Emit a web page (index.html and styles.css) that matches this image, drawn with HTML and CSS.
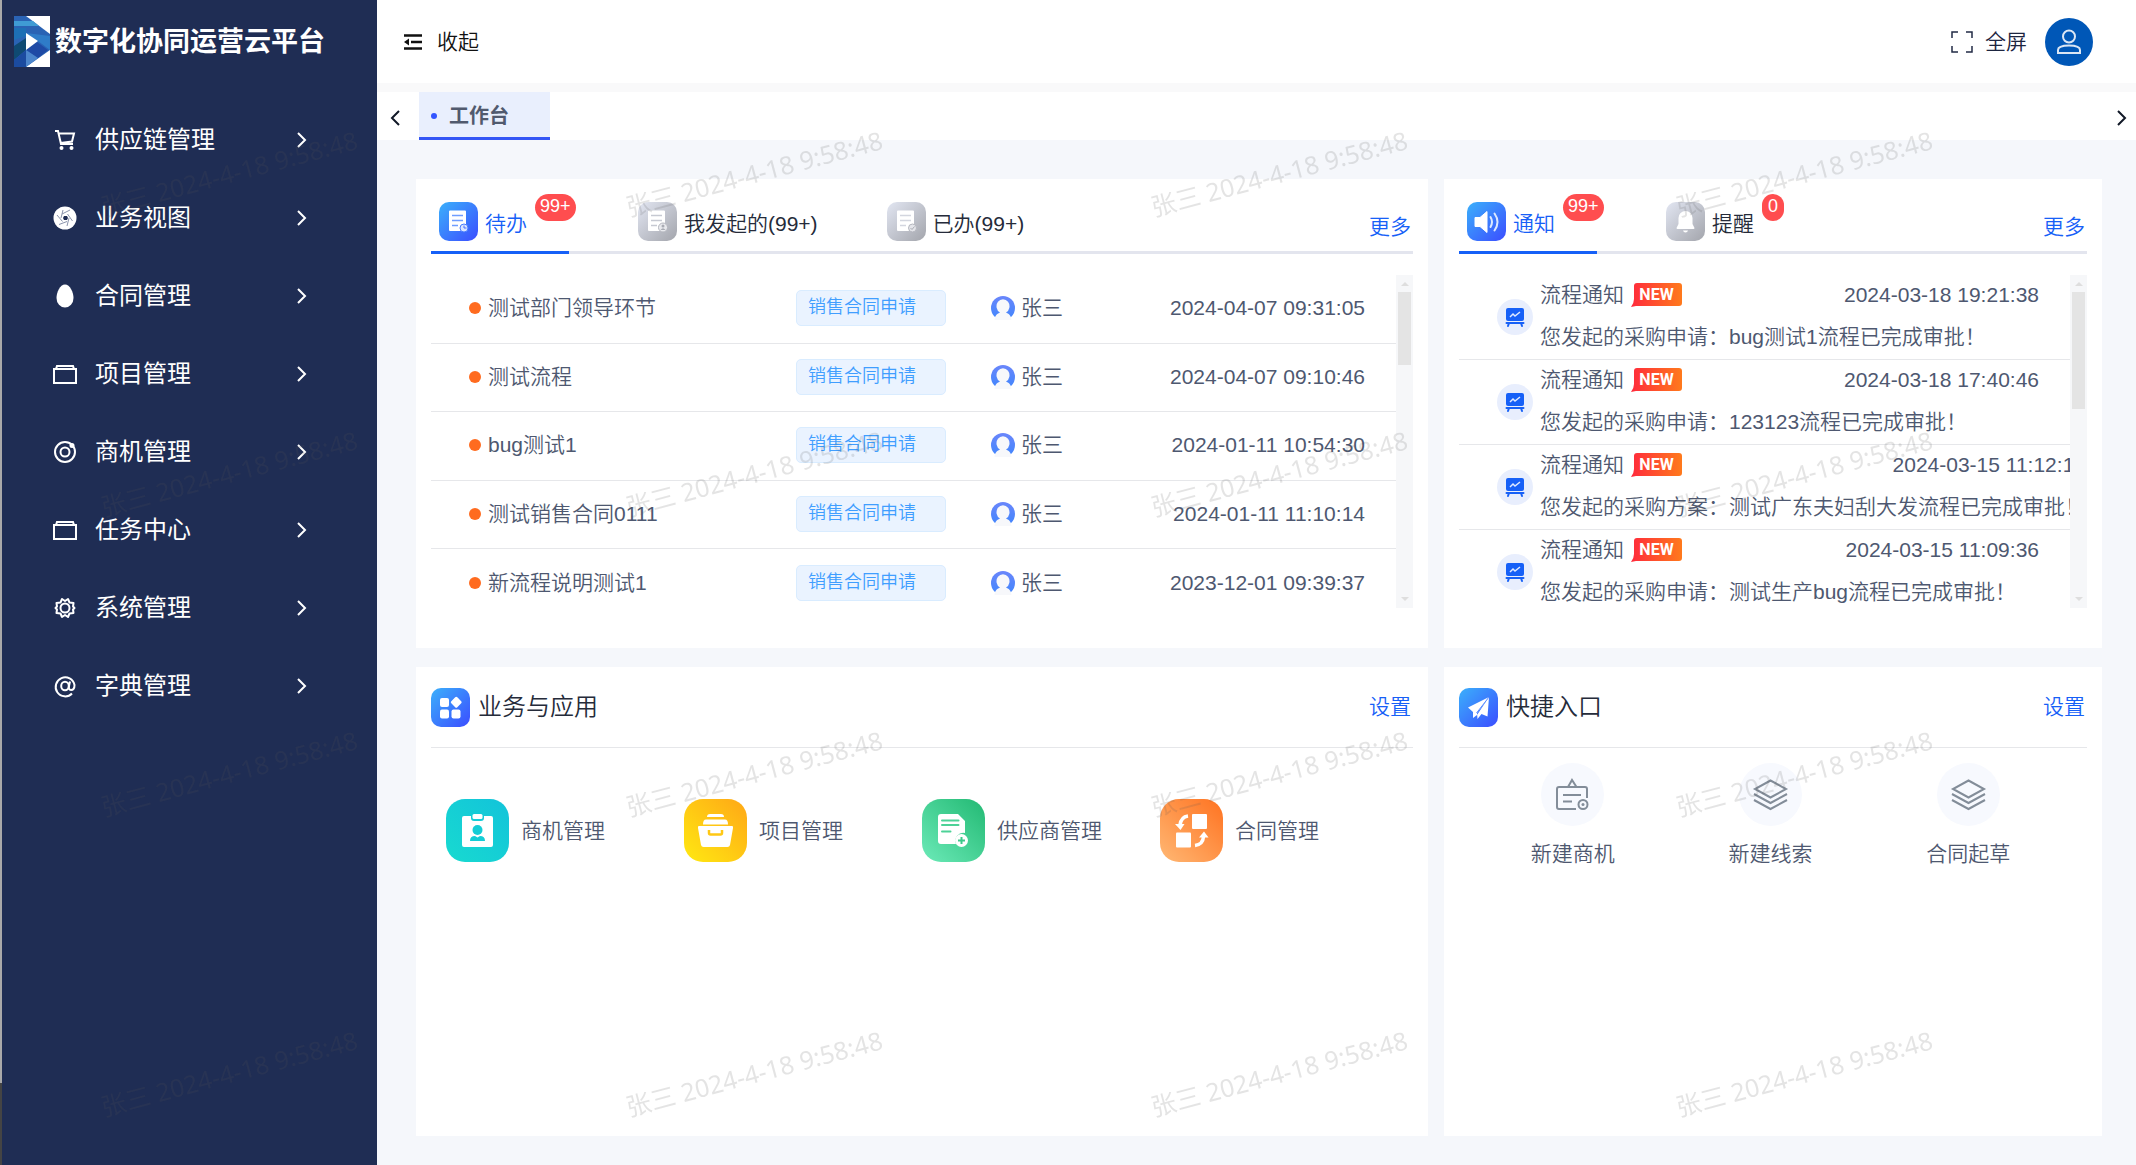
FILE: index.html
```html
<!DOCTYPE html>
<html lang="zh-CN">
<head>
<meta charset="utf-8">
<meta name="viewport" content="width=device-width, initial-scale=1">
<title>数字化协同运营云平台</title>
<link rel="stylesheet" href="styles.css">
</head>
<body>
<svg class="defs" aria-hidden="true">
  <defs>
    <linearGradient id="g-blue" x1="0" y1="0" x2="1" y2="1"><stop offset="0" stop-color="#3bb0fb"/><stop offset="1" stop-color="#3b4dff"/></linearGradient>
    <linearGradient id="g-gray" x1="0" y1="0" x2="1" y2="1"><stop offset="0" stop-color="#e2e6f2"/><stop offset="1" stop-color="#a3a5ac"/></linearGradient>
    <linearGradient id="g-cyan" x1="0" y1="1" x2="1" y2="0"><stop offset="0" stop-color="#18dad0"/><stop offset="1" stop-color="#12c3da"/></linearGradient>
    <linearGradient id="g-yellow" x1="0" y1="1" x2="1" y2="0"><stop offset="0" stop-color="#ffe912"/><stop offset="1" stop-color="#ffa716"/></linearGradient>
    <linearGradient id="g-green" x1="0" y1="1" x2="1" y2="0"><stop offset="0" stop-color="#6ceab8"/><stop offset="1" stop-color="#22b973"/></linearGradient>
    <linearGradient id="g-orange" x1="0" y1="1" x2="1" y2="0"><stop offset="0" stop-color="#ffb874"/><stop offset="1" stop-color="#ff7220"/></linearGradient>
    <linearGradient id="g-new" x1="0" y1="0" x2="1" y2="0"><stop offset="0" stop-color="#ff2a3c"/><stop offset="1" stop-color="#ff7a1c"/></linearGradient>
    <linearGradient id="g-user" x1="0" y1="0" x2="0" y2="1"><stop offset="0" stop-color="#6a86fb"/><stop offset="1" stop-color="#3f86fd"/></linearGradient>
    <symbol id="i-arrow" viewBox="0 0 12 18"><path d="M2 2l7 7-7 7" fill="none" stroke="currentColor" stroke-width="2"/></symbol>
    <symbol id="i-arrow-left" viewBox="0 0 12 18"><path d="M9 2L2 9l7 7" fill="none" stroke="currentColor" stroke-width="2"/></symbol>
    <symbol id="i-folder" viewBox="0 0 24 24"><path d="M1 7h22v14H1zM3 7l1-3h16l1 3" fill="none" stroke="currentColor" stroke-width="2"/></symbol>
    <symbol id="i-doc" viewBox="0 0 39 39">
      <path d="M10 9.500q0-1 1-1h15q1 0 1 1V22a5 5 0 0 0-3 7H11q-1 0-1-1z" fill="#fff"/>
      <path d="M13 13.500h11M13 18.500h11M13 23.500h6" stroke="currentColor" stroke-width="1.500"/>
    </symbol>
    <symbol id="i-user" viewBox="0 0 24 24">
      <circle cx="12" cy="12" r="12" fill="url(#g-user)"/>
      <path d="M3.500 24c.5-5 3-6.500 5.500-7.500a6.500 7 0 1 1 6 0c2.500 1 5 2.500 5.500 7.500z" fill="#f7f8fb"/>
    </symbol>
    <symbol id="i-board" viewBox="0 0 36 36">
      <circle cx="18" cy="18" r="18" fill="#e8eefd"/>
      <rect x="9" y="9" width="18" height="13" rx="2" fill="#1660f7"/>
      <path d="M13 18l3-3 2 2 5-4" fill="none" stroke="#dfe9ff" stroke-width="1.500"/>
      <path d="M9.500 24h17M12 24l-1 3M24 24l1 3" stroke="#1660f7" stroke-width="2" stroke-linecap="round"/>
    </symbol>
    <symbol id="i-newtag" viewBox="0 0 51 24"><path d="M6 0h42q3 0 3 3v17q0 3-3 3H5l-5 1q3-4 3-8V3q0-3 3-3z" fill="url(#g-new)"/></symbol>
    <symbol id="i-layers" viewBox="0 0 63 63">
      <circle cx="31.500" cy="31.500" r="31.500" fill="#f7f9fe"/>
      <path d="M31.500 17.500L47 26l-15.500 8.500L16 26zM15 31l16.500 9L48 31M15 37l16.500 9L48 37" fill="none" stroke="#838d99" stroke-width="2"/>
    </symbol>
  </defs>
</svg>

<div class="app">
  <aside class="sidebar">
    <div class="brand">
      <svg class="brand-logo" viewBox="0 0 36 51" aria-hidden="true">
        <path d="M0 0h36v51H0z" fill="#fff"/>
        <path d="M0 0h12l24 18v16L12 51H0z" fill="#2a63b4"/>
        <path d="M0 5h19l6 5H0z" fill="#3f9bd4"/>
        <path d="M0 12h12v8L0 24z" fill="#1d6fb5"/>
        <path d="M12 17l24 3v14l-12-9z" fill="#2f7cc8"/>
        <path d="M0 30l12-8v12L0 44z" fill="#0f4a72"/>
        <path d="M0 44l12-10v17H0z" fill="#1b4ba0"/>
        <path d="M12 34l11-8 11 8-10 8z" fill="#1f4aa5"/>
        <path d="M12 34l12 8-12 9z" fill="#4c86cc"/>
        <path d="M12 17l12 8-12 9z" fill="#fff"/>
      </svg>
      <h1 class="brand-name">数字化协同运营云平台</h1>
    </div>
    <nav class="menu">
      <a class="menu-item" href="#"><svg class="menu-icon" viewBox="0 0 24 24" aria-hidden="true"><path d="M2 3h3l3 13h12M5 5.500h16l-2 8L7.500 15" fill="none" stroke="currentColor" stroke-width="2"/><circle cx="8.500" cy="20" r="2" fill="currentColor"/><circle cx="18.500" cy="20" r="2" fill="currentColor"/></svg><span class="menu-text">供应链管理</span><svg class="arrow" aria-hidden="true"><use href="#i-arrow"/></svg></a>
      <a class="menu-item" href="#"><svg class="menu-icon" viewBox="0 0 24 24" aria-hidden="true"><circle cx="12" cy="12" r="11.500" fill="currentColor"/><path d="M9 8L17 4M14.500 8l5 7M16 12l-2 8M14 15.500l-8 3M9.500 15.500L4 9M8 12l2-8" stroke="#8a93ab"/><path d="M11 10h3l1 2-1 2h-3l-1-2z" fill="#1f2d54"/></svg><span class="menu-text">业务视图</span><svg class="arrow" aria-hidden="true"><use href="#i-arrow"/></svg></a>
      <a class="menu-item" href="#"><svg class="menu-icon" viewBox="0 0 24 24" aria-hidden="true"><path d="M12 0.500c5 0 8.500 8 8.500 13.500a8.500 9.500 0 0 1-17 0C3.500 8.500 7 .5 12 .5z" fill="currentColor"/></svg><span class="menu-text">合同管理</span><svg class="arrow" aria-hidden="true"><use href="#i-arrow"/></svg></a>
      <a class="menu-item" href="#"><svg class="menu-icon" aria-hidden="true"><use href="#i-folder"/></svg><span class="menu-text">项目管理</span><svg class="arrow" aria-hidden="true"><use href="#i-arrow"/></svg></a>
      <a class="menu-item" href="#"><svg class="menu-icon" viewBox="0 0 24 24" aria-hidden="true"><g fill="none" stroke="currentColor" stroke-width="2"><circle cx="12" cy="12" r="10"/><circle cx="12" cy="12" r="4.500"/></g><circle cx="19" cy="5.500" r="2.500" fill="currentColor"/></svg><span class="menu-text">商机管理</span><svg class="arrow" aria-hidden="true"><use href="#i-arrow"/></svg></a>
      <a class="menu-item" href="#"><svg class="menu-icon" aria-hidden="true"><use href="#i-folder"/></svg><span class="menu-text">任务中心</span><svg class="arrow" aria-hidden="true"><use href="#i-arrow"/></svg></a>
      <a class="menu-item" href="#"><svg class="menu-icon" viewBox="0 0 24 24" aria-hidden="true"><g fill="none" stroke="currentColor" stroke-width="2" stroke-linejoin="round"><path d="M9 3l3 2 3-2 1.500 3.500 4 .5-.5 3.500 1.500 1.500-1.500 1.500.5 3.500-4 .5L15 21l-3-2-3 2-1.500-3.500-4-.5.5-3.500L2.500 12 4 10.500 3.500 7l4-.5z"/><circle cx="12" cy="12" r="4.500"/></g></svg><span class="menu-text">系统管理</span><svg class="arrow" aria-hidden="true"><use href="#i-arrow"/></svg></a>
      <a class="menu-item" href="#"><svg class="menu-icon" viewBox="0 0 24 24" aria-hidden="true"><g fill="none" stroke="currentColor" stroke-width="2"><path d="M19 19.500A9.500 9.500 0 1 1 21.500 11c0 3.500-1.500 5-3.500 5s-2.500-1.500-2-4l1-4.500"/><ellipse cx="12" cy="12" rx="3.800" ry="4.300"/></g></svg><span class="menu-text">字典管理</span><svg class="arrow" aria-hidden="true"><use href="#i-arrow"/></svg></a>
    </nav>
  </aside>

  <div class="page">
    <header class="topbar">
      <button class="plain collapse" type="button">
        <svg width="18" height="16" viewBox="0 0 18 16" aria-hidden="true"><path d="M0 1.500h18M7 8h11M0 14.500h18" stroke="#111" stroke-width="2.400"/><path d="M0 8l5-3.500v7z" fill="#111"/></svg>
        收起
      </button>
      <div class="topbar-right">
        <button class="plain fullscreen" type="button">
          <svg width="22" height="22" viewBox="0 0 22 22" aria-hidden="true"><path d="M1 7V1h6M15 1h6v6M21 15v6h-6M7 21H1v-6" fill="none" stroke="#222b45" stroke-width="1.500"/></svg>
          全屏
        </button>
        <button class="plain avatar" type="button" aria-label="个人中心">
          <svg width="48" height="48" viewBox="0 0 48 48" aria-hidden="true"><circle cx="24" cy="24" r="24" fill="#0057b7"/><g fill="none" stroke="#dbe6f4" stroke-width="2"><circle cx="24" cy="18.500" r="6"/><path d="M13 35v-3c0-3 5-4.500 11-4.500s11 1.500 11 4.500v3z"/></g></svg>
        </button>
      </div>
    </header>
    <div class="tabbar">
      <button class="plain tab-nav" type="button" aria-label="上一个"><svg class="arrow" aria-hidden="true"><use href="#i-arrow-left"/></svg></button>
      <a class="page-tab" href="#">工作台</a>
      <button class="plain tab-nav tab-nav-next" type="button" aria-label="下一个"><svg class="arrow" aria-hidden="true"><use href="#i-arrow"/></svg></button>
    </div>

    <main class="board">
      <section class="card">
        <div class="card-tabs">
          <button class="plain tab has-badge is-active" type="button">
            <svg class="tile" viewBox="0 0 39 39" color="#6f9dff" aria-hidden="true"><rect width="39" height="39" rx="10" fill="url(#g-blue)"/><use href="#i-doc"/><circle cx="25" cy="26" r="4" fill="#dbe6ff" stroke="#4a7dff"/><path d="M25 23.500V26h2.500" fill="none" stroke="#4a6dff"/></svg>
            <span class="tab-text">待办<span class="badge">99+</span></span>
          </button>
          <button class="plain tab" type="button">
            <svg class="tile" viewBox="0 0 39 39" color="#c6c9d2" aria-hidden="true"><rect width="39" height="39" rx="10" fill="url(#g-gray)"/><use href="#i-doc"/><circle cx="25" cy="25.500" r="4.500" fill="#e9eaee" stroke="#b4b6be"/><circle cx="25" cy="24" r="1.500" fill="#a9abb3"/><path d="M22.500 28q2.500-3.500 5 0z" fill="#a9abb3"/></svg>
            <span class="tab-text">我发起的(99+)</span>
          </button>
          <button class="plain tab" type="button">
            <svg class="tile" viewBox="0 0 39 39" color="#d3d6df" aria-hidden="true"><rect width="39" height="39" rx="10" fill="url(#g-gray)"/><use href="#i-doc"/><circle cx="25.500" cy="26" r="4" fill="#e4e5ea" stroke="#b4b6be"/><path d="M23.500 26l1.500 1.500 2.500-3" fill="none" stroke="#a9abb3"/></svg>
            <span class="tab-text">已办(99+)</span>
          </button>
          <a class="more" href="#">更多</a>
        </div>
        <div class="scroll">
          <ul class="todo-list">
            <li class="todo"><a class="todo-name" href="#">测试部门领导环节</a><span class="tag">销售合同申请</span><span class="user"><svg class="face" aria-hidden="true"><use href="#i-user"/></svg>张三</span><time>2024-04-07 09:31:05</time></li>
            <li class="todo"><a class="todo-name" href="#">测试流程</a><span class="tag">销售合同申请</span><span class="user"><svg class="face" aria-hidden="true"><use href="#i-user"/></svg>张三</span><time>2024-04-07 09:10:46</time></li>
            <li class="todo"><a class="todo-name" href="#">bug测试1</a><span class="tag">销售合同申请</span><span class="user"><svg class="face" aria-hidden="true"><use href="#i-user"/></svg>张三</span><time>2024-01-11 10:54:30</time></li>
            <li class="todo"><a class="todo-name" href="#">测试销售合同0111</a><span class="tag">销售合同申请</span><span class="user"><svg class="face" aria-hidden="true"><use href="#i-user"/></svg>张三</span><time>2024-01-11 11:10:14</time></li>
            <li class="todo"><a class="todo-name" href="#">新流程说明测试1</a><span class="tag">销售合同申请</span><span class="user"><svg class="face" aria-hidden="true"><use href="#i-user"/></svg>张三</span><time>2023-12-01 09:39:37</time></li>
          </ul>
          <div class="track" aria-hidden="true"><span class="track-up"></span><span class="thumb"></span><span class="track-down"></span></div>
        </div>
      </section>

      <section class="card">
        <div class="card-tabs">
          <button class="plain tab has-badge is-active" type="button">
            <svg class="tile" viewBox="0 0 39 39" aria-hidden="true"><rect width="39" height="39" rx="10" fill="url(#g-blue)"/><path d="M8 15.500h5l7-6v21l-7-6H8z" fill="#fff" stroke="#fff" stroke-linejoin="round"/><path d="M23.500 15q3 5 0 10M27.500 11.500q6 8.500 0 17" fill="none" stroke="#dbe8ff" stroke-width="2" stroke-linecap="round"/></svg>
            <span class="tab-text">通知<span class="badge">99+</span></span>
          </button>
          <button class="plain tab has-badge" type="button">
            <svg class="tile" viewBox="0 0 39 39" aria-hidden="true"><rect width="39" height="39" rx="10" fill="url(#g-gray)"/><path d="M19.500 9a7 7 0 0 1 7 7v6l2 4q0 1-1 1h-16q-1 0-1-1l2-4v-6a7 7 0 0 1 7-7z" fill="#fff"/><path d="M17 28.500h5q-.5 2-2.500 2t-2.500-2z" fill="#fff"/></svg>
            <span class="tab-text">提醒<span class="badge">0</span></span>
          </button>
          <a class="more" href="#">更多</a>
        </div>
        <div class="scroll">
          <ul class="notice-list">
            <li class="notice"><svg class="notice-icon" aria-hidden="true"><use href="#i-board"/></svg><div class="notice-body"><div class="notice-head">流程通知<span class="new"><svg class="new-shape" aria-hidden="true"><use href="#i-newtag"/></svg><b>NEW</b></span><time>2024-03-18 19:21:38</time></div><div>您发起的采购申请：bug测试1流程已完成审批！</div></div></li>
            <li class="notice"><svg class="notice-icon" aria-hidden="true"><use href="#i-board"/></svg><div class="notice-body"><div class="notice-head">流程通知<span class="new"><svg class="new-shape" aria-hidden="true"><use href="#i-newtag"/></svg><b>NEW</b></span><time>2024-03-18 17:40:46</time></div><div>您发起的采购申请：123123流程已完成审批！</div></div></li>
            <li class="notice"><svg class="notice-icon" aria-hidden="true"><use href="#i-board"/></svg><div class="notice-body"><div class="notice-head">流程通知<span class="new"><svg class="new-shape" aria-hidden="true"><use href="#i-newtag"/></svg><b>NEW</b></span><time>2024-03-15 11:12:13</time></div><div>您发起的采购方案：测试广东夫妇刮大发流程已完成审批！</div></div></li>
            <li class="notice"><svg class="notice-icon" aria-hidden="true"><use href="#i-board"/></svg><div class="notice-body"><div class="notice-head">流程通知<span class="new"><svg class="new-shape" aria-hidden="true"><use href="#i-newtag"/></svg><b>NEW</b></span><time>2024-03-15 11:09:36</time></div><div>您发起的采购申请：测试生产bug流程已完成审批！</div></div></li>
          </ul>
          <div class="track" aria-hidden="true"><span class="track-up"></span><span class="thumb thumb-long"></span><span class="track-down"></span></div>
        </div>
      </section>

      <section class="card">
        <div class="card-head">
          <svg class="tile" viewBox="0 0 39 39" aria-hidden="true"><rect width="39" height="39" rx="10" fill="url(#g-blue)"/><g fill="#fff"><rect x="9" y="10" width="9" height="9" rx="2"/><rect x="9" y="21.500" width="9" height="9" rx="2"/><rect x="20.500" y="21.500" width="9" height="9" rx="2"/><rect x="21" y="10" width="8.500" height="8.500" rx="1.500" transform="rotate(45 25.250 14.250)"/></g></svg>
          <h2 class="card-title">业务与应用</h2>
          <a class="more" href="#">设置</a>
        </div>
        <div class="apps">
          <a class="app-link" href="#"><svg class="app-icon" viewBox="0 0 63 63" aria-hidden="true"><rect width="63" height="63" rx="19" fill="url(#g-cyan)"/><path d="M18 17h7v2q0 3 3 3h7q3 0 3-3v-2h7q2 0 2 2v27q0 2-2 2H18q-2 0-2-2V19q0-2 2-2z" fill="#fff"/><rect x="26.500" y="15" width="10" height="5" rx="1.500" fill="#fff"/><circle cx="31.500" cy="31" r="5" fill="#14cdd6"/><path d="M24 42q0-5 5-5l2.500 1.500L34 37q5 0 5 5z" fill="#14cdd6"/></svg>商机管理</a>
          <a class="app-link" href="#"><svg class="app-icon" viewBox="0 0 63 63" aria-hidden="true"><rect width="63" height="63" rx="19" fill="url(#g-yellow)"/><path d="M26 15h11q3 0 3 3H23q0-3 3-3zM22 20.500h19q3 0 3 5H19q0-5 3-5zM15 27h33q1.500 0 1 2l-3 17q-.5 2-2.500 2h-24q-2 0-2.500-2l-3-17q-.5-2 1-2z" fill="#fff"/><path d="M25 31v3q0 1.500 1.500 1.500h10q1.500 0 1.500-1.500v-3" fill="none" stroke="#ffc814" stroke-width="2.500"/></svg>项目管理</a>
          <a class="app-link" href="#"><svg class="app-icon" viewBox="0 0 63 63" aria-hidden="true"><rect width="63" height="63" rx="19" fill="url(#g-green)"/><path d="M19 15h17l7 7v12a8 8 0 0 0-9 11H19q-3 0-3-3V18q0-3 3-3z" fill="#fff"/><path d="M20 21.500h16.500M20 26h16.500M20 32.500h8.500" stroke="#4dd297" stroke-width="2" stroke-linecap="round"/><circle cx="39.500" cy="41.500" r="6.500" fill="#fff"/><path d="M39.500 38v7M36 41.500h7" stroke="#3cc98a" stroke-width="2"/></svg>供应商管理</a>
          <a class="app-link" href="#"><svg class="app-icon" viewBox="0 0 63 63" aria-hidden="true"><rect width="63" height="63" rx="19" fill="url(#g-orange)"/><rect x="32" y="15" width="15" height="15" rx="1" fill="#fff"/><rect x="16" y="33.500" width="15" height="15" rx="1" fill="#fff"/><path d="M28 17q-7 1-8 9" fill="none" stroke="#fff" stroke-width="3.500"/><path d="M15 25h9.500l-4 6z" fill="#fff"/><path d="M35 46.500q8-1 8.500-9" fill="none" stroke="#fff" stroke-width="3.500"/><path d="M39 38.500h9.500l-4.500-6z" fill="#fff"/></svg>合同管理</a>
        </div>
      </section>

      <section class="card">
        <div class="card-head">
          <svg class="tile" viewBox="0 0 39 39" aria-hidden="true"><rect width="39" height="39" rx="10" fill="url(#g-blue)"/><path d="M30 9L9 19.500l5 4.500zM30 9l-1.500 19.500-6-2.500-4 5-.5-6zM30 9L14 24v6l4-3z" fill="#fff"/><path d="M30 9L17.500 25" stroke="#5c8cff" stroke-width="1"/></svg>
          <h2 class="card-title">快捷入口</h2>
          <a class="more" href="#">设置</a>
        </div>
        <div class="quick">
          <a class="quick-link" href="#"><svg class="app-icon" viewBox="0 0 63 63" aria-hidden="true"><circle cx="31.500" cy="31.500" r="31.500" fill="#f7f9fe"/><g fill="none" stroke="#838d99" stroke-width="2"><path d="M46 35V26q0-2-2-2H18q-2 0-2 2v18q0 2 2 2h17M27 24l4-7 4.500 7M22 32h18M22 38.500h9"/><circle cx="42" cy="41.500" r="4.500"/></g><circle cx="42" cy="41.500" r="1.500" fill="#838d99"/></svg>新建商机</a>
          <a class="quick-link" href="#"><svg class="app-icon" aria-hidden="true"><use href="#i-layers"/></svg>新建线索</a>
          <a class="quick-link" href="#"><svg class="app-icon" aria-hidden="true"><use href="#i-layers"/></svg>合同起草</a>
        </div>
      </section>
    </main>
  </div>
</div>

<div class="watermark" aria-hidden="true">
  <span>张三 2024-4-18 9:58:48</span><span>张三 2024-4-18 9:58:48</span><span>张三 2024-4-18 9:58:48</span><span>张三 2024-4-18 9:58:48</span>
  <span>张三 2024-4-18 9:58:48</span><span>张三 2024-4-18 9:58:48</span><span>张三 2024-4-18 9:58:48</span><span>张三 2024-4-18 9:58:48</span>
  <span>张三 2024-4-18 9:58:48</span><span>张三 2024-4-18 9:58:48</span><span>张三 2024-4-18 9:58:48</span><span>张三 2024-4-18 9:58:48</span>
  <span>张三 2024-4-18 9:58:48</span><span>张三 2024-4-18 9:58:48</span><span>张三 2024-4-18 9:58:48</span><span>张三 2024-4-18 9:58:48</span>
</div>
</body>
</html>
```

FILE: styles.css
```css
* { box-sizing: border-box; }

body {
  margin: 0;
  font-family: "Liberation Sans", "Noto Sans CJK SC", sans-serif;
  font-size: 21px;
  font-weight: 350;
  line-height: 32px;
  color: #4e5870;
}

ul { margin: 0; padding: 0; list-style: none; }
a { color: inherit; text-decoration: none; }
svg { flex: none; display: block; }
h1, h2 { margin: 0; }
.defs { position: absolute; width: 0; height: 0; }

.plain {
  border: 0;
  padding: 0;
  background: none;
  font: inherit;
  color: inherit;
  cursor: pointer;
}

.app { display: flex; min-height: 100vh; background: #f5f7fb; }

/* Sidebar */
.sidebar {
  flex: none;
  width: 377px;
  padding-left: 2px;
  background: linear-gradient(#a9a9a9 93%, #444 93%) left / 2px 100% no-repeat #1f2d54;
  color: #fff;
}
.brand { display: flex; align-items: center; gap: 5px; height: 83px; padding-left: 12px; }
.brand-logo { width: 36px; height: 51px; }
.brand-name { font-size: 27px; font-weight: 700; line-height: 40px; white-space: nowrap; }
.menu { padding-top: 18px; }
.menu-item {
  display: flex;
  align-items: center;
  height: 78px;
  padding: 0 69px 0 51px;
  font-size: 24px;
  font-weight: 400;
}
.menu-icon { width: 24px; height: 24px; margin-right: 18px; }
.menu-text { flex: 1; }
.arrow { width: 12px; height: 18px; }

/* Top bar and page tabs */
.page { flex: 1; min-width: 0; display: flex; flex-direction: column; }
.topbar {
  display: flex;
  justify-content: space-between;
  align-items: center;
  height: 83px;
  padding: 0 43px 0 27px;
  background: #fff;
  color: #111;
}
.collapse, .fullscreen { display: flex; align-items: center; }
.collapse { gap: 15px; }
.fullscreen { gap: 12px; color: #1d2540; }
.topbar-right { display: flex; align-items: center; gap: 18px; }
.tabbar {
  display: flex;
  align-items: center;
  height: 57px;
  border-top: 9px solid #f9f9fa;
  padding: 0 8px 0 13px;
  background: #fff;
  color: #111827;
}
.tab-nav { margin-right: 17px; padding-top: 4px; }
.tab-nav-next { margin: 0 0 0 auto; }
.page-tab {
  display: flex;
  align-items: center;
  gap: 12px;
  width: 131px;
  height: 48px;
  padding: 3px 0 0 12px;
  border-bottom: 3px solid #3355f5;
  background: #e9effd;
  color: #515a6e;
  font-size: 20px;
  font-weight: 700;
}
.page-tab::before { content: ""; width: 6px; height: 6px; border-radius: 50%; background: #3355ff; }

/* Cards */
.board {
  flex: 1;
  display: grid;
  grid-template-columns: minmax(0, 1012fr) minmax(0, 658fr);
  grid-auto-rows: 1fr;
  gap: 19px 16px;
  padding: 39px 34px 29px 39px;
}
.card { padding: 0 15px; background: #fff; }
.card-tabs { display: flex; gap: 61px; height: 75px; border-bottom: 3px solid #e3e5ee; }
.tab {
  position: relative;
  display: flex;
  align-items: center;
  gap: 7px;
  height: 75px;
  padding: 13px 0 0 8px;
  border-bottom: 3px solid transparent;
  color: #252b3a;
  white-space: nowrap;
}
.tab.has-badge { padding-right: 42px; }
.tab.is-active { border-color: #1660f7; color: #1660f7; }
.tab-text { padding-top: 4px; }
.tile { width: 39px; height: 39px; }
.badge {
  position: absolute;
  top: 15px;
  left: 104px;
  min-width: 22px;
  height: 27px;
  padding: 0 5px;
  border-radius: 14px;
  background: #ff4d4f;
  color: #fff;
  font-size: 18px;
  line-height: 24px;
  text-align: center;
}
.more { margin-left: auto; padding-right: 2px; color: #1660f7; }
.card-tabs .more { padding-top: 32px; }

.scroll { display: flex; height: 333px; margin-top: 21px; overflow: hidden; }
.track {
  flex: none;
  display: flex;
  flex-direction: column;
  align-items: center;
  width: 17px;
  padding: 7px 0;
  background: #f6f7f9;
}
.track-up, .track-down { border: 4px solid transparent; }
.track-up { border-top: 0; border-bottom-color: #dedede; margin-bottom: 6px; }
.track-down { border-bottom: 0; border-top-color: #dedede; margin-top: auto; }
.thumb { width: 13px; height: 73px; background: #e4e4e4; }
.thumb-long { height: 117px; }

.todo-list { flex: 1; display: grid; grid-auto-rows: 1fr; height: 343px; }
.todo {
  display: grid;
  grid-template-columns: 1fr 150px 134px 195px;
  gap: 45px;
  align-items: center;
  padding: 0 31px 1px 38px;
  border-bottom: 1px solid #e6e7ea;
}
.todo-name { display: flex; align-items: center; gap: 7px; white-space: nowrap; }
.todo-name::before { content: ""; width: 12px; height: 12px; border-radius: 50%; background: #ff6b1f; }
.tag {
  height: 36px;
  padding-left: 11px;
  border: 1px solid #d9ecff;
  border-radius: 5px;
  background: #eaf3ff;
  color: #409eff;
  font-size: 18px;
}
.user { display: flex; align-items: center; gap: 6px; }
.face { width: 24px; height: 24px; }
time { white-space: nowrap; text-align: right; }

.notice-list { flex: 1; min-width: 0; overflow: hidden; }
.notice {
  display: flex;
  align-items: center;
  gap: 7px;
  height: 85px;
  padding-left: 38px;
  border-bottom: 1px solid #e6e7ea;
}
.notice-icon { width: 36px; height: 36px; }
.notice-body { flex: none; min-width: 499px; padding-bottom: 2px; line-height: 42px; white-space: nowrap; }
.notice-head { display: flex; align-items: center; }
.notice-head time { margin-left: auto; }
.new { position: relative; width: 51px; height: 24px; margin-left: 7px; color: #fff; }
.new-shape { width: 51px; height: 24px; }
.new b { position: absolute; inset: 0; font: 700 16px/24px Roboto, sans-serif; text-align: center; }

.card-head {
  display: flex;
  align-items: center;
  gap: 8px;
  height: 81px;
  border-bottom: 1px solid #e6e7ea;
}
.card-title { color: #252b3a; font-size: 24px; font-weight: 350; }
.apps { display: grid; grid-template-columns: repeat(4, 1fr); padding: 51px 15px 0; }
.app-link { display: flex; align-items: center; gap: 12px; white-space: nowrap; }
.app-icon { width: 63px; height: 63px; }
.quick { display: grid; grid-template-columns: repeat(3, 1fr); padding: 15px 20px 0 15px; }
.quick-link { display: flex; flex-direction: column; align-items: center; gap: 12px; }

/* Watermark tiled over the whole window */
.watermark {
  position: fixed;
  inset: 23px 0 0 -33px;
  display: grid;
  grid-template-columns: repeat(4, 525px);
  grid-auto-rows: 300px;
  place-items: center;
  overflow: hidden;
  pointer-events: none;
  color: rgba(84, 84, 84, .16);
  font-family: "Noto Sans", "Noto Sans CJK SC", sans-serif;
  font-size: 25px;
  font-weight: 400;
}
.watermark span { transform: rotate(-15deg); white-space: nowrap; }
```
